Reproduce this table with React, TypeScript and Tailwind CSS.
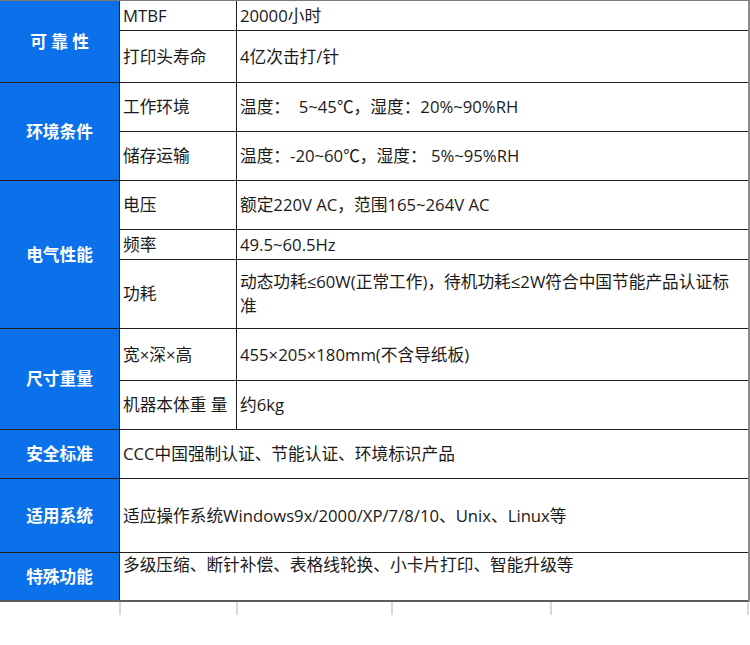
import React from "react";

type SubRow = { name?: string; value: React.ReactNode; h: string; top?: boolean };
type Block = { label: string; rows: SubRow[] };

const specs: Block[] = [
  {
    label: "可 靠 性",
    rows: [
      { name: "MTBF", value: "20000小时", h: "h-[30px]" },
      { name: "打印头寿命", value: "4亿次击打/针", h: "h-[51px]" },
    ],
  },
  {
    label: "环境条件",
    rows: [
      { name: "工作环境", value: "温度：  5~45℃，湿度：20%~90%RH", h: "h-[49px]" },
      { name: "储存运输", value: "温度：-20~60℃，湿度： 5%~95%RH", h: "h-[48px]" },
    ],
  },
  {
    label: "电气性能",
    rows: [
      { name: "电压", value: "额定220V AC，范围165~264V AC", h: "h-[49px]" },
      { name: "频率", value: "49.5~60.5Hz", h: "h-[30px]" },
      {
        name: "功耗",
        value: (
          <>
            动态功耗≤60W(正常工作)，待机功耗≤2W符合中国节能产品认证标
            <br />准
          </>
        ),
        h: "h-[68px]",
      },
    ],
  },
  {
    label: "尺寸重量",
    rows: [
      { name: "宽×深×高", value: "455×205×180mm(不含导纸板)", h: "h-[52px]" },
      { name: "机器本体重 量", value: "约6kg", h: "h-[48px]" },
    ],
  },
  {
    label: "安全标准",
    rows: [{ value: "CCC中国强制认证、节能认证、环境标识产品", h: "h-[48px]" }],
  },
  {
    label: "适用系统",
    rows: [{ value: "适应操作系统Windows9x/2000/XP/7/8/10、Unix、Linux等", h: "h-[73px]" }],
  },
  {
    label: "特殊功能",
    rows: [{ value: "多级压缩、断针补偿、表格线轮换、小卡片打印、智能升级等", h: "h-[47px]", top: true }],
  },
];

const App: React.FC = () => {
  return (
    <div className="w-[750px] h-[645px] bg-white font-['Open_Sans','Noto_Sans_CJK_SC',sans-serif] text-[16.7px] leading-[24px] text-[#1a1a1a]">
      <div className="border-t border-[#7a7a7a] border-r-2 border-r-[#8c8c8c]">
        {specs.map((block, i) => (
          <div
            key={block.label}
            className={`flex ${i === specs.length - 1 ? "border-b-2 border-[#5a5a5a]" : "border-b border-[#1e1e1e]"}`}
          >
            {/* category */}
            <div className="w-[120px] shrink-0 bg-[#0a71ea] border-r border-[#1e1e1e] flex items-center justify-center text-white font-bold text-[16.7px] whitespace-pre">
              {block.label}
            </div>
            <div className="flex-1 flex flex-col">
              {block.rows.map((row, j) => (
                <div
                  key={j}
                  className={`flex ${row.h} ${j < block.rows.length - 1 ? "border-b border-[#1e1e1e]" : ""}`}
                >
                  {row.name && (
                    <div className="w-[117px] shrink-0 border-r border-[#1e1e1e] pl-[3px] flex items-center whitespace-nowrap">
                      {row.name}
                    </div>
                  )}
                  <div className={`flex-1 px-[3px] flex ${row.top ? "items-start" : "items-center"}`}>
                    <div className="whitespace-pre-wrap">{row.value}</div>
                  </div>
                </div>
              ))}
            </div>
          </div>
        ))}
      </div>
      {/* hidden column lines below the table */}
      <div className="flex h-[13px]">
        <div className="w-[119px]" />
        <div className="w-[117px] border-l-2 border-[#d8d8d8]" />
        <div className="w-[155px] border-l-2 border-[#d8d8d8]" />
        <div className="w-[159px] border-l-2 border-[#d8d8d8]" />
        <div className="w-[199px] border-l-2 border-r-2 border-[#d8d8d8]" />
      </div>
    </div>
  );
};

export default App;
